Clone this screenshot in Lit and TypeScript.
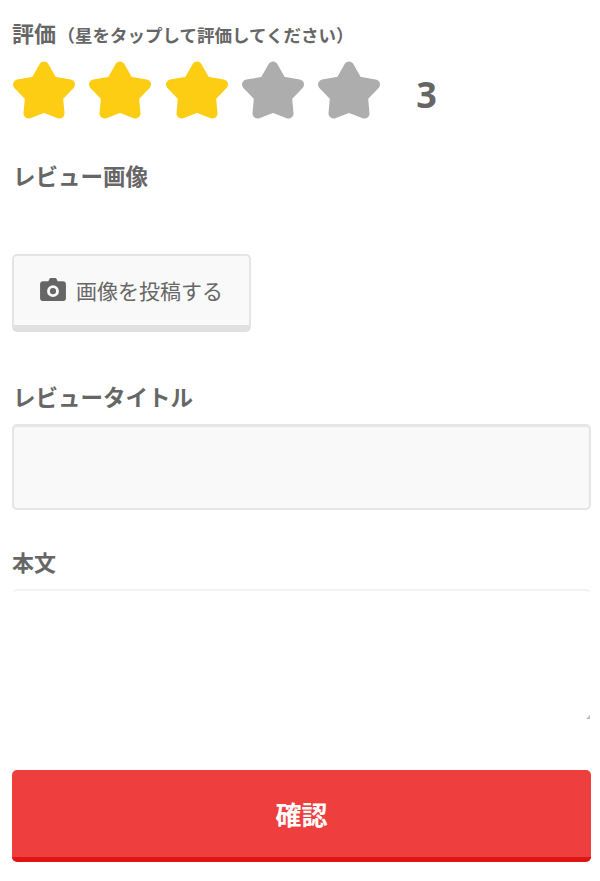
import { LitElement, html, css, svg } from "lit";
import { customElement } from "lit/decorators.js";

const star = (on: boolean) => html`<svg class="star ${on ? "on" : "off"}" viewBox="0 0 64 58" aria-hidden="true">
  ${svg`<polygon points="32,5.5 40.5,20.5 58,23.5 46,36 47.5,52.5 32,46.5 16.5,52.5 18,36 6,23.5 23.5,20.5" />`}
</svg>`;

@customElement("app-root")
export class AppRoot extends LitElement {
  static styles = css`
    :host {
      display: block;
      width: 600px;
      height: 881px;
      overflow: hidden;
      background: #fff;
      color: #666;
      font-family: "Noto Sans CJK JP", "Noto Sans", sans-serif;
    }
    .page {
      display: flex;
      flex-direction: column;
      padding: 0 9px 0 12px;
    }
    .label {
      font-size: 22px;
      font-weight: 700;
      line-height: 32px;
      margin: 0;
    }
    .label small {
      font-size: 17.5px;
      margin-left: 1.5px;
    }
    .rate-label { margin-top: 16px; }
    .stars {
      display: flex;
      align-items: flex-start;
      margin-top: 10px;
    }
    .star {
      width: 64px;
      height: 58px;
      margin-right: 12.25px;
      flex: none;
    }
    .star polygon { stroke-width: 10; stroke-linejoin: round; }
    .on polygon { fill: #fdcd14; stroke: #fdcd14; }
    .off polygon { fill: #adadad; stroke: #adadad; }
    .score {
      font-size: 36px;
      font-weight: 700;
      font-family: "Open Sans", "Noto Sans", sans-serif;
      line-height: 68px;
      margin-left: 23px;
    }
    .indent { margin-left: 1px; font-size: 22.5px; }
    .image-label { margin-top: 30px; }
    .upload {
      box-sizing: border-box;
      display: flex;
      align-items: center;
      justify-content: center;
      gap: 10px;
      width: 239px;
      height: 78px;
      margin-top: 63px;
      padding-bottom: 2px;
      background: #f9f9f9;
      border: 2px solid #e4e4e4;
      border-bottom: 7px solid #e0e0e0;
      border-radius: 5px;
      font-size: 21px;
      color: #666;
    }
    .upload svg { width: 26px; height: 23px; flex: none; }
    .title-label { margin-top: 48px; }
    .input {
      box-sizing: border-box;
      height: 86px;
      margin-top: 12px;
      background: #f9f9f9;
      border: 2px solid #e6e6e6;
      border-radius: 5px;
      box-shadow: inset 0 1px 1px #e4e4e4;
    }
    .body-label { margin-top: 35px; }
    .textarea {
      position: relative;
      box-sizing: border-box;
      height: 131px;
      margin-top: 12px;
      border-top: 2px solid #f2f2f2;
      border-radius: 5px;
    }
    .grip {
      position: absolute;
      right: 1px;
      bottom: 1px;
      width: 4px;
      height: 4px;
    }
    .confirm {
      box-sizing: border-box;
      display: flex;
      align-items: center;
      justify-content: center;
      height: 92px;
      margin-top: 50px;
      background: #ef3e3e;
      border-bottom: 5px solid #e11414;
      border-radius: 5px;
      color: #fff;
      font-size: 26px;
      font-weight: 700;
    }
  `;

  render() {
    return html`<div class="page">
      <h2 class="label rate-label">評価<small>（星をタップして評価してください）</small></h2>
      <div class="stars">
        ${[1, 2, 3, 4, 5].map((n) => star(n <= 3))}
        <span class="score">3</span>
      </div>
      <h2 class="label image-label indent">レビュー画像</h2>
      <div class="upload">
        <svg viewBox="0 0 27 24" aria-hidden="true">
          <path fill="#666" fill-rule="evenodd" d="M9.5 1.5 C9.8 .6 10.5 0 11.5 0 H15.5 C16.5 0 17.2 .6 17.5 1.5 L18.3 3.5 H24 C25.7 3.5 27 4.8 27 6.5 V21 C27 22.7 25.7 24 24 24 H3 C1.3 24 0 22.7 0 21 V6.5 C0 4.8 1.3 3.5 3 3.5 H8.7 Z M13.5 7.5 A6.2 6.2 0 1 0 13.5 19.9 A6.2 6.2 0 1 0 13.5 7.5 Z M13.5 10.5 A3.2 3.2 0 1 1 13.5 16.9 A3.2 3.2 0 1 1 13.5 10.5 Z" />
        </svg>
        <span>画像を投稿する</span>
      </div>
      <h2 class="label title-label indent">レビュータイトル</h2>
      <div class="input"></div>
      <h2 class="label body-label">本文</h2>
      <div class="textarea">
        <svg class="grip" viewBox="0 0 4 4" aria-hidden="true">
          <path d="M0 4 L4 0 V4 Z" fill="#bbb" />
        </svg>
      </div>
      <div class="confirm">確認</div>
    </div>`;
  }
}
